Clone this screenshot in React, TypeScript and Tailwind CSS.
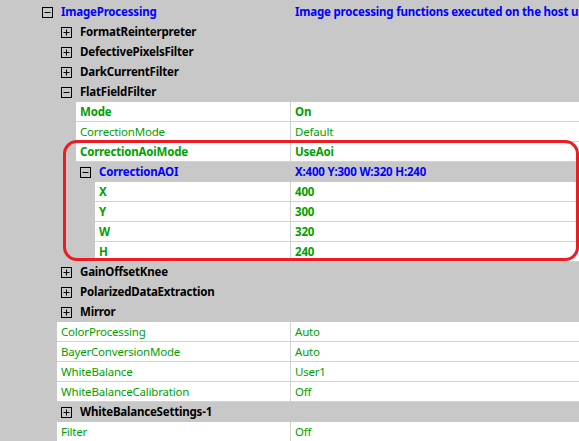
import React from 'react';

type Row =
  | { kind: 'cat'; level: number; name: string; open: boolean; blue?: boolean; value?: string }
  | { kind: 'leaf'; level: number; name: string; value: string; bold?: boolean };

const rows: Row[] = [
  { kind: 'cat', level: 0, name: 'ImageProcessing', open: true, blue: true, value: 'Image processing functions executed on the host using the CPU' },
  { kind: 'cat', level: 1, name: 'FormatReinterpreter', open: false },
  { kind: 'cat', level: 1, name: 'DefectivePixelsFilter', open: false },
  { kind: 'cat', level: 1, name: 'DarkCurrentFilter', open: false },
  { kind: 'cat', level: 1, name: 'FlatFieldFilter', open: true },
  { kind: 'leaf', level: 2, name: 'Mode', value: 'On', bold: true },
  { kind: 'leaf', level: 2, name: 'CorrectionMode', value: 'Default' },
  { kind: 'leaf', level: 2, name: 'CorrectionAoiMode', value: 'UseAoi', bold: true },
  { kind: 'cat', level: 2, name: 'CorrectionAOI', open: true, blue: true, value: 'X:400 Y:300 W:320 H:240' },
  { kind: 'leaf', level: 3, name: 'X', value: '400', bold: true },
  { kind: 'leaf', level: 3, name: 'Y', value: '300', bold: true },
  { kind: 'leaf', level: 3, name: 'W', value: '320', bold: true },
  { kind: 'leaf', level: 3, name: 'H', value: '240', bold: true },
  { kind: 'cat', level: 1, name: 'GainOffsetKnee', open: false },
  { kind: 'cat', level: 1, name: 'PolarizedDataExtraction', open: false },
  { kind: 'cat', level: 1, name: 'Mirror', open: false },
  { kind: 'leaf', level: 1, name: 'ColorProcessing', value: 'Auto' },
  { kind: 'leaf', level: 1, name: 'BayerConversionMode', value: 'Auto' },
  { kind: 'leaf', level: 1, name: 'WhiteBalance', value: 'User1' },
  { kind: 'leaf', level: 1, name: 'WhiteBalanceCalibration', value: 'Off' },
  { kind: 'cat', level: 1, name: 'WhiteBalanceSettings-1', open: false },
  { kind: 'leaf', level: 1, name: 'Filter', value: 'Off' },
];

const Expander = ({ open }: { open: boolean }) => (
  <svg width="11" height="11" viewBox="0 0 11 11" className="shrink-0">
    <rect x="0.5" y="0.5" width="10" height="10" fill="none" stroke="#000" />
    <path d="M2.5 5.5h6" stroke="#000" />
    {!open && <path d="M5.5 2.5v6" stroke="#000" />}
  </svg>
);

const CategoryRow = ({ row }: { row: Extract<Row, { kind: 'cat' }> }) => (
  <div className="flex h-[20px] items-center bg-[#c8c8c8]">
    <div className="flex w-[290px] shrink-0 items-center gap-[8px] overflow-hidden whitespace-nowrap" style={{ paddingLeft: 42 + 19 * row.level }}>
      <Expander open={row.open} />
      <span className={`font-bold ${row.blue ? 'text-[#0000ff]' : 'text-black'}`}>{row.name}</span>
    </div>
    {row.value && (
      <span className="pl-[5px] font-bold text-[#0000ff] whitespace-nowrap overflow-hidden">{row.value}</span>
    )}
  </div>
);

const LeafRow = ({ row }: { row: Extract<Row, { kind: 'leaf' }> }) => {
  const start = 38 + 19 * row.level;
  return (
    <div className="flex h-[20px]">
      <div className="shrink-0 bg-[#c8c8c8]" style={{ width: start }} />
      <div className={`flex flex-1 border-b border-[#d2d2d2] bg-white text-[#00a000] ${row.bold ? 'font-bold' : ''}`}>
        <div className="shrink-0 overflow-hidden whitespace-nowrap pl-[4px] leading-[19px]" style={{ width: 290 - start }}>
          {row.name}
        </div>
        <div className="w-px bg-[#d2d2d2]" />
        <div className="pl-[4px] leading-[19px] whitespace-nowrap">{row.value}</div>
      </div>
    </div>
  );
};

export default function App() {
  return (
    <div className="relative h-[441px] w-[579px] overflow-hidden bg-[#c8c8c8] pt-[2px] text-[11.5px] tracking-[-0.2px] font-['Noto_Sans',sans-serif]">
      {rows.map((row, i) =>
        row.kind === 'cat' ? <CategoryRow key={i} row={row} /> : <LeafRow key={i} row={row} />
      )}
      {/* highlight around the AOI settings */}
      <div className="pointer-events-none absolute left-[63px] top-[140px] h-[121px] w-[516px] rounded-[14px] border-[3px] border-[#ec1c24]" />
    </div>
  );
}
